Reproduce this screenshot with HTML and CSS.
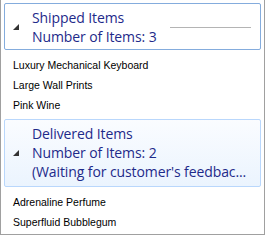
FILE: index.html
```html
<html>
  <head>
    <link rel="stylesheet" href="styles.css">
  </head>
  <body>

    <div class="tree">
      <div class="group-header focused">
        <div class="glyph">
          <svg width="6" height="6" viewBox="0 0 6 6"><polygon points="6,0 6,6 0,6" fill="#333"/></svg>
        </div>
        <div class="group-text">
          <div class="group-line">Shipped Items</div>
          <div class="group-line">Number of Items: 3</div>
        </div>
        <div class="group-rule"></div>
      </div>
      <div class="items">
        <div class="item">Luxury Mechanical Keyboard</div>
        <div class="item">Large Wall Prints</div>
        <div class="item">Pink Wine</div>
      </div>

      <div class="group-header hovered">
        <div class="glyph">
          <svg width="6" height="6" viewBox="0 0 6 6"><polygon points="6,0 6,6 0,6" fill="#333"/></svg>
        </div>
        <div class="group-text">
          <div class="group-line">Delivered Items</div>
          <div class="group-line">Number of Items: 2</div>
          <div class="group-line">(Waiting for customer's feedbac...</div>
        </div>
      </div>
      <div class="items">
        <div class="item">Adrenaline Perfume</div>
        <div class="item">Superfluid Bubblegum</div>
      </div>
    </div>

  </body>
</html>
```

FILE: styles.css
```css
body {
  margin: 0;
  background: #FFFFFF;
}

.tree {
  width: 265px;
  height: 235px;
  box-sizing: border-box;
  padding: 3px 2px 0 2px;
  border: 1px solid #A0A0A0;
  border-top: none;
  overflow: hidden;
}

.group-header {
  display: flex;
  align-items: center;
  margin: 0 1px;
  border: 1px solid #84ACDD;
  border-radius: 2px;
  padding: 4px 0 3px 0;
  font-family: "Open Sans", sans-serif;
  font-size: 14px;
  line-height: 19px;
  color: #1E2A8A;
}

.group-header.hovered {
  border-color: #B9D7FC;
  background: linear-gradient(180deg, #FAFCFF, #EBF4FE);
  padding-bottom: 5px;
}

.glyph {
  width: 27px;
  flex: none;
  display: flex;
  justify-content: flex-end;
  padding-right: 13px;
  box-sizing: border-box;
}

.glyph svg {
  display: block;
}

.group-text {
  min-width: 0;
  flex: 0 1 auto;
}

.group-line {
  white-space: nowrap;
  letter-spacing: -0.1px;
}

.group-rule {
  flex: 1;
  height: 1px;
  background: #B4B4B4;
  margin: 0 9px 0 13px;
}

.items {
  padding: 5px 0 4px 0;
}

.item {
  height: 20px;
  line-height: 20px;
  padding-left: 10px;
  font-family: "Liberation Sans", Arial, sans-serif;
  font-size: 10.5px;
  color: #000000;
  white-space: nowrap;
}
```
